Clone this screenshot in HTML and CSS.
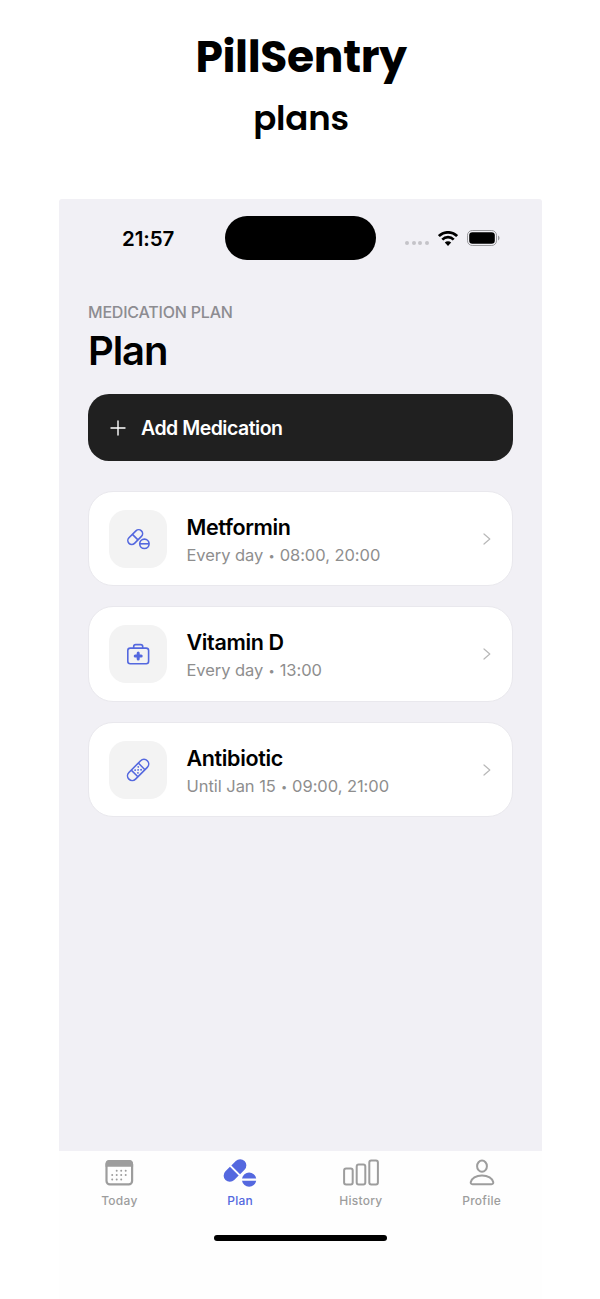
FILE: index.html
```html
<!DOCTYPE html>
<html lang="en">
<head>
    <meta charset="UTF-8">
    <meta name="viewport" content="width=device-width, initial-scale=1.0">
    <title>PillSentry</title>
    <link rel="stylesheet" href="styles.css">
</head>
<body>
    <svg class="symbols" width="0" height="0">
        <symbol id="chevron" viewBox="0 0 8 12">
            <path d="M1 1l5.8 5L1 11" fill="none" stroke="currentColor" stroke-width="1.2" stroke-linecap="round" stroke-linejoin="round"/>
        </symbol>
    </svg>

    <header class="intro">
        <h1 class="intro-title">PillSentry</h1>
        <p class="intro-subtitle">plans</p>
    </header>

    <div class="phone">
        <div class="status-bar">
            <span class="time">21:57</span>
            <span class="island"></span>
            <span class="dots"><i></i><i></i><i></i><i></i></span>
            <svg class="wifi" width="20" height="15" viewBox="0 0 20 15">
                <path d="M.9 5.1a12.8 12.8 0 0 1 18.2 0M4.3 8.6a8 8 0 0 1 11.4 0" fill="none" stroke="#000" stroke-width="2.7"/>
                <path d="M10 14.9l-3.2-3.3a4.5 4.5 0 0 1 6.4 0z" fill="#000"/>
            </svg>
            <svg class="battery" width="33" height="16" viewBox="0 0 33 16">
                <rect x="0.5" y="0.5" width="29" height="15" rx="4.7" fill="none" stroke="#99999c"/>
                <rect x="2.2" y="2.2" width="25.6" height="11.6" rx="3.2" fill="#000"/>
                <path d="M31 5.5c2 .7 2 4.3 0 5z" fill="#99999c"/>
            </svg>
        </div>

        <main class="content">
            <p class="eyebrow">MEDICATION PLAN</p>
            <h2 class="page-title">Plan</h2>

            <button class="add-button">
                <svg width="16" height="16" viewBox="0 0 16 16">
                    <path d="M8 1v14M1 8h14" stroke="#fff" stroke-width="1.4" stroke-linecap="round"/>
                </svg>
                <span>Add Medication</span>
            </button>

            <div class="card">
                <div class="card-icon">
                    <svg width="30" height="30" viewBox="0 0 30 30" fill="none" stroke="#5468df" stroke-width="1.6">
                        <g transform="translate(12.2 13.1) rotate(-45)">
                            <rect x="-8.8" y="-3.9" width="17.6" height="7.8" rx="3.9"/>
                            <path d="M0-3.9v7.8"/>
                        </g>
                        <circle cx="21.4" cy="19.8" r="4.7"/>
                        <path d="M16.8 19.8h9.2"/>
                    </svg>
                </div>
                <div class="card-text">
                    <h3 class="name">Metformin</h3>
                    <p class="schedule">Every day <span class="bullet">•</span> 08:00, 20:00</p>
                </div>
                <svg class="chevron" width="8" height="12"><use href="#chevron"/></svg>
            </div>

            <div class="card">
                <div class="card-icon">
                    <svg width="30" height="30" viewBox="0 0 30 30" fill="none" stroke="#5468df" stroke-width="1.6">
                        <rect x="4.8" y="9.1" width="20.8" height="15.6" rx="2.4"/>
                        <path d="M10.7 9V7.6c0-1.4.6-2 2-2h5c1.4 0 2 .6 2 2V9"/>
                        <path d="M15.2 14v6M12.2 17h6" stroke-width="3" stroke-linecap="round"/>
                    </svg>
                </div>
                <div class="card-text">
                    <h3 class="name">Vitamin D</h3>
                    <p class="schedule">Every day <span class="bullet">•</span> 13:00</p>
                </div>
                <svg class="chevron" width="8" height="12"><use href="#chevron"/></svg>
            </div>

            <div class="card">
                <div class="card-icon">
                    <svg width="30" height="30" viewBox="0 0 30 30">
                        <g transform="translate(15.1 14.9) rotate(-45)">
                            <rect x="-13" y="-4.7" width="26" height="9.4" rx="4.7" fill="none" stroke="#5468df" stroke-width="1.6"/>
                            <path d="M-5-4.7v9.4M5-4.7v9.4" stroke="#5468df" stroke-width="1.5"/>
                            <g fill="#5468df">
                                <circle cx="-2.2" cy="-2" r=".9"/>
                                <circle cx="2.2" cy="-2" r=".9"/>
                                <circle cx="0" cy="0" r=".9"/>
                                <circle cx="-2.2" cy="2" r=".9"/>
                                <circle cx="2.2" cy="2" r=".9"/>
                            </g>
                        </g>
                    </svg>
                </div>
                <div class="card-text">
                    <h3 class="name">Antibiotic</h3>
                    <p class="schedule">Until Jan 15 <span class="bullet">•</span> 09:00, 21:00</p>
                </div>
                <svg class="chevron" width="8" height="12"><use href="#chevron"/></svg>
            </div>
        </main>

        <nav class="tabs">
            <a class="tab">
                <svg width="36" height="30" viewBox="0 0 36 30">
                    <rect x="5.5" y="3.2" width="25.6" height="23.2" rx="3.4" fill="none" stroke="#9d9d9d" stroke-width="2.2"/>
                    <path d="M4.5 8.8V6c0-2.4 1.3-3.9 3.7-3.9h20.2c2.4 0 3.7 1.5 3.7 3.9v2.8z" fill="#9d9d9d"/>
                    <path d="M15.7 12.8h10M11.2 17.1h15M11.2 21.4h9.5" stroke="#9d9d9d" stroke-width="2" stroke-linecap="round" stroke-dasharray="0 4.5"/>
                </svg>
                <span>Today</span>
            </a>
            <a class="tab active">
                <svg width="36" height="30" viewBox="0 0 36 30" fill="#5468df">
                    <g transform="translate(13 12.5) rotate(-45)">
                        <path d="M-1-6.2v12.4h-6.3a6.2 6.2 0 0 1 0-12.4zM1-6.2v12.4h6.3a6.2 6.2 0 0 0 0-12.4z"/>
                    </g>
                    <path d="M20 20.6a7.2 7.2 0 0 1 14.2 0zM20 22.8a7.2 7.2 0 0 0 14.2 0z"/>
                </svg>
                <span>Plan</span>
            </a>
            <a class="tab">
                <svg width="36" height="30" viewBox="0 0 36 30" fill="none" stroke="#9d9d9d" stroke-width="2">
                    <rect x="1.1" y="10.4" width="8.6" height="16.2" rx="2"/>
                    <rect x="13.7" y="6.6" width="8.6" height="20" rx="2"/>
                    <rect x="26.3" y="2.6" width="8.6" height="24" rx="2"/>
                </svg>
                <span>History</span>
            </a>
            <a class="tab">
                <svg width="36" height="30" viewBox="0 0 36 30" fill="none" stroke="#9d9d9d" stroke-width="2">
                    <ellipse cx="18" cy="8.2" rx="4.9" ry="5.6"/>
                    <path d="M8.5 26.2c-1.5 0-2-1-1.7-2.3.9-3.5 5-6.5 11.2-6.5s10.3 3 11.2 6.5c.3 1.3-.2 2.3-1.7 2.3z"/>
                </svg>
                <span>Profile</span>
            </a>
        </nav>
        <div class="home-indicator"></div>
    </div>
</body>
</html>
```

FILE: styles.css
```css
* {
    box-sizing: border-box;
}
body {
    margin: 0;
    min-height: 1299px;
    background: #fff;
    color: #000;
    font-family: Inter, Roboto, sans-serif;
}
h1, h2, h3, p {
    margin: 0;
}
.symbols {
    display: block;
}
.intro {
    height: 199px;
    padding-top: 29px;
    padding-left: 2px;
    text-align: center;
    font-family: Poppins, Inter, sans-serif;
}
.intro-title {
    font-size: 44px;
    line-height: 56px;
    font-weight: 700;
    letter-spacing: -0.35px;
}
.intro-subtitle {
    padding-top: 9px;
    font-size: 34px;
    line-height: 48px;
    font-weight: 600;
    letter-spacing: -0.2px;
}
.phone {
    width: 483px;
    margin-left: 59px;
    background: #f1f0f5;
    border-radius: 3px 3px 0 0;
}
/* Status bar */
.status-bar {
    display: flex;
    align-items: center;
    height: 78px;
    padding-left: 63px;
}
.time {
    width: 103px;
    font-size: 20.5px;
    font-weight: 600;
    letter-spacing: -0.1px;
}
.island {
    width: 151px;
    height: 44px;
    border-radius: 22px;
    background: #000;
}
.dots {
    display: flex;
    gap: 2.5px;
    margin-left: 29px;
    margin-top: 9px;
}
.dots i {
    width: 4px;
    height: 4px;
    border-radius: 50%;
    background: #c4c3c8;
}
.wifi {
    margin-left: 9px;
}
.battery {
    margin-left: 9px;
}
/* Page content */
.content {
    height: 874px;
    padding: 25px 29px 0;
}
.eyebrow {
    font-size: 16px;
    line-height: 20px;
    font-weight: 500;
    letter-spacing: -0.2px;
    color: #8d8c91;
}
.page-title {
    padding-top: 4px;
    font-size: 40px;
    line-height: 50px;
    font-weight: 600;
    letter-spacing: -1.1px;
}
.add-button {
    display: flex;
    align-items: center;
    gap: 15px;
    width: 425px;
    height: 67px;
    margin-top: 18.4px;
    margin-bottom: 29.6px;
    padding: 0 22px;
    border: none;
    border-radius: 21px;
    background: #202020;
    color: #fff;
    font-family: inherit;
    font-size: 19.5px;
    font-weight: 600;
    letter-spacing: -0.5px;
}
.card {
    display: flex;
    align-items: center;
    width: 425px;
    height: 95.5px;
    margin-bottom: 20px;
    padding: 0 21.5px 0 20px;
    border: 1px solid #e9e8ed;
    border-radius: 25px;
    background: #fff;
}
.card-icon {
    display: flex;
    align-items: center;
    justify-content: center;
    width: 58px;
    height: 58px;
    border-radius: 17px;
    background: #f3f3f3;
}
.card-text {
    flex: 1;
    padding-top: 4px;
    padding-left: 19.5px;
}
.name {
    font-size: 21.5px;
    line-height: 28px;
    font-weight: 600;
    letter-spacing: -0.35px;
}
.schedule {
    font-size: 16.5px;
    line-height: 28px;
    color: #8e8e8e;
    letter-spacing: -0.05px;
    white-space: nowrap;
}
.bullet {
    padding: 0 0.5px;
    font-size: 11px;
    line-height: 1;
    vertical-align: 1px;
}
.chevron {
    color: #b8b8b8;
}
/* Bottom navigation */
.tabs {
    display: flex;
    height: 83px;
    padding-top: 7px;
    background: #fefefe;
}
.tab {
    flex: 1;
    display: flex;
    flex-direction: column;
    align-items: center;
    color: #9d9d9d;
    font-size: 12px;
    line-height: 16px;
    font-weight: 500;
    letter-spacing: 0.25px;
}
.tab span {
    padding-top: 5px;
}
.active {
    color: #5468df;
}
.home-indicator {
    height: 65px;
    background: #fefefe;
}
.home-indicator::before {
    content: "";
    display: block;
    width: 173px;
    height: 6px;
    margin-left: 155px;
    border-radius: 3px;
    background: #000;
    transform: translateY(1px);
}
```
